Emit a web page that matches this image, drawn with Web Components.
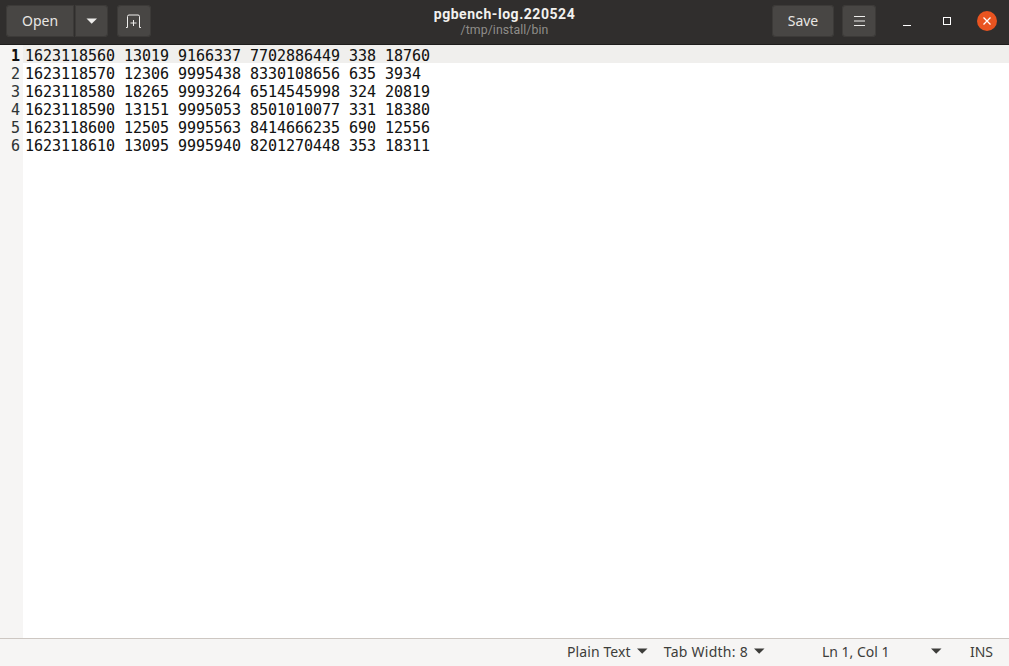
<!DOCTYPE html>
<html><head><meta charset="utf-8"><style>
html,body{margin:0;padding:0;height:100%;overflow:hidden}
body{width:1009px;height:666px;display:flex;flex-direction:column;font-family:"Noto Sans","Open Sans",sans-serif}
</style></head><body>
<app-header></app-header>
<text-view style="flex:1"></text-view>
<status-bar></status-bar>
<script>
function def(name,html){customElements.define(name,class extends HTMLElement{constructor(){super();this.attachShadow({mode:'open'}).innerHTML=html;}});}
def('h-btn',`<style>:host{display:flex;align-items:center;justify-content:center;box-sizing:border-box;height:32px;background:#484644;border-radius:4px;color:#e8e6e3;font-size:14px;padding-bottom:2px;box-shadow:inset 0 0 0 1px #3c3a38}</style><slot></slot>`);
def('app-header',`<style>
:host{display:flex;flex:none;box-sizing:border-box;height:45px;background:#302e2d;border-bottom:1px solid #1e1d1c;padding:5px 0 0 6px;align-items:flex-start;position:relative}
.split{display:flex;margin-right:9px}
.title{position:absolute;left:0;right:0;top:6px;text-align:center;pointer-events:none;font-family:Roboto,"Noto Sans",sans-serif}
.t{font-size:14px;font-weight:700;color:#f2f1ef;line-height:17px;letter-spacing:.55px}
.s{font-size:12.3px;color:#8f8d8a;line-height:14px;letter-spacing:.1px}
.sp{flex:1}svg{display:block}
.wc{display:flex;align-items:center;height:32px;margin-left:26px;color:#fff}
.wc>div{display:flex;align-items:center;justify-content:center}
</style>
<div class="split">
<h-btn style="width:68px;border-radius:4px 0 0 4px">Open</h-btn>
<h-btn style="width:34px;border-radius:0 4px 4px 0;border-left:1px solid #302e2d;padding-bottom:0"><svg width="12" height="6"><path d="M0.5 0.5h10.5L5.7 5.8z" fill="#eeedeb"/></svg></h-btn>
</div>
<h-btn style="width:34px;padding-bottom:0"><svg width="16" height="14" fill="none" stroke="#eeedeb" stroke-width="1"><path d="M1.5 13.5V2.5a1.5 1.5 0 0 1 1.5-1.5h9a1.5 1.5 0 0 1 1.5 1.5V13.5H15M1.5 13.5H0"/><path d="M7.5 6v6M4.5 9h6"/></svg></h-btn>
<div class="title"><div class="t">pgbench-log.220524</div><div class="s">/tmp/install/bin</div></div>
<div class="sp"></div>
<h-btn style="width:62px;margin-right:8px">Save</h-btn>
<h-btn style="width:34px;padding-bottom:0"><svg width="11" height="10" stroke="#eeedeb" stroke-width="1"><path d="M0 .5h11M0 5h11M0 9.5h11"/></svg></h-btn>
<div class="wc">
<div style="width:10px;margin-right:31px"><svg width="8" height="10" stroke="#fff" stroke-width="1"><path d="M0 9.5h8"/></svg></div>
<div style="width:9px;margin-right:26px;margin-left:-1px"><svg width="8" height="8" fill="none" stroke="#fff" stroke-width="1"><rect x=".5" y=".5" width="7" height="7"/></svg></div>
<div style="width:20px;height:20px;border-radius:50%;background:#e95420;margin-right:12px"><svg width="8" height="8" stroke="#fff" stroke-width="1.3"><path d="M.5 .5l7 7M7.5 .5l-7 7"/></svg></div>
</div>`);
def('text-view',`<style>
:host{display:flex;min-height:0;background:#fff;font:15px/18px "DejaVu Sans Mono",monospace;color:#111;letter-spacing:-.03px;-webkit-text-stroke:.08px currentColor}
.g{width:23px;background:#f6f5f4;flex:none;box-sizing:border-box;text-align:right;padding:2px 3px 0 0;color:#2e3436}
.g b{display:block;color:#111}
.g span{display:block}
.wrap{flex:1;display:flex;flex-direction:column}
.row{box-sizing:border-box;height:18px;padding:2px 0 0 2px;white-space:pre}
.row.cur{background:#f0efed}
</style>
<div class="g"><b>1</b><span>2</span><span>3</span><span>4</span><span>5</span><span>6</span></div>
<div class="wrap">
<div class="row cur">1623118560 13019 9166337 7702886449 338 18760</div>
<div class="row">1623118570 12306 9995438 8330108656 635 3934</div>
<div class="row">1623118580 18265 9993264 6514545998 324 20819</div>
<div class="row">1623118590 13151 9995053 8501010077 331 18380</div>
<div class="row">1623118600 12505 9995563 8414666235 690 12556</div>
<div class="row">1623118610 13095 9995940 8201270448 353 18311</div>
</div>`);
def('status-item',`<style>:host{display:flex;align-items:center;gap:6px;font-size:14px;color:#3d3d3a;white-space:nowrap}svg{display:block}</style><slot></slot><svg width="11" height="6"><path d="M0 .5h10.5L5.2 5.8z" fill="#3d3d3a"/></svg>`);
def('status-bar',`<style>
:host{display:flex;flex:none;box-sizing:border-box;height:28px;background:#f6f5f4;border-top:1px solid #cdc7c2;align-items:center;justify-content:flex-end;font-size:14px;color:#3d3d3a;padding-bottom:3px}
.lc{display:flex;align-items:center;width:120px;justify-content:space-between;margin-left:57px;white-space:nowrap}
svg{display:block}
.ins{margin-left:28px;margin-right:16px}
</style>
<status-item style="margin-right:16px;letter-spacing:.12px">Plain Text</status-item>
<status-item style="letter-spacing:.25px">Tab Width: 8</status-item>
<div class="lc"><span>Ln 1, Col 1</span><svg width="11" height="6"><path d="M0 .5h10.5L5.2 5.8z" fill="#3d3d3a"/></svg></div>
<div class="ins">INS</div>`);
</script>
</body></html>
